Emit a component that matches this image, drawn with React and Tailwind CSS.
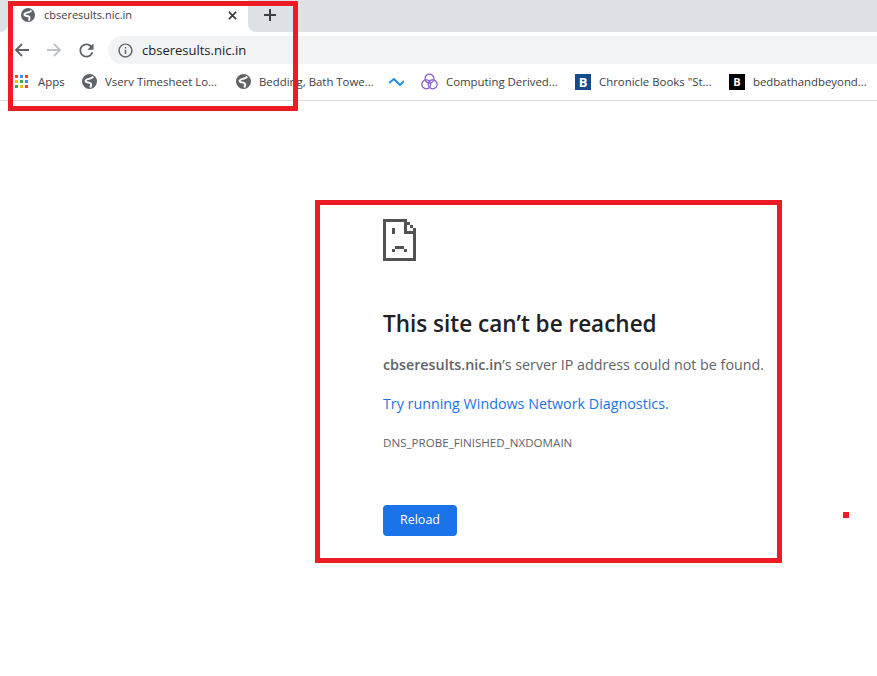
function Globe({ className }) {
  return (
    <svg viewBox="2 2 20 20" className={className}>
      <circle cx="12" cy="12" r="10" fill="#5f6368" />
      <path d="M17 5.5c-2 2.5-4 2.500-6 3S6 10 7 12s4 1 6 2 1.500 3 0 6" fill="none" stroke="white" strokeWidth="2.6" />
    </svg>
  );
}

function AppsIcon() {
  const colors = ["#ea4335", "#4285f4", "#ea4335", "#fbbc04", "#34a853", "#4285f4", "#34a853", "#fbbc04", "#ea4335"];
  return (
    <div className="grid grid-cols-3 gap-[2px] w-[13px] h-[13px] shrink-0">
      {colors.map((c, i) => (
        <div key={i} className="w-[3px] h-[3px]" style={{ backgroundColor: c }} />
      ))}
    </div>
  );
}

function Bookmark({ icon, label, className }) {
  return (
    <div className={"flex items-center gap-2 whitespace-nowrap " + className}>
      {icon}
      <span className="text-[11.4px] text-[#3c4043]">{label}</span>
    </div>
  );
}

function SadPage() {
  return (
    <svg width="33" height="42" viewBox="0 0 11 14" shapeRendering="crispEdges" fill="#525252">
      <path d="M0 0h8v1H1v12h9V3h1v11H0z" />
      <path d="M8 1h1v1H8zM9 2h1v1H9zM7 1h1v3h3v1H7z" />
      <path d="M3 3h1v2H3zM4 9h3v1H4zM3 10h1v1H3zM7 10h1v1H7z" />
    </svg>
  );
}

export default function App() {
  return (
    <div className="relative w-[877px] h-[676px] overflow-hidden bg-white font-['Open_Sans',sans-serif]">
      {/* TABS */}
      <div className="h-8 flex">
        <div className="w-[8px] bg-[#dee1e6] rounded-br-lg" />
        <div className="w-[240px] bg-white rounded-t-lg flex items-center pl-[13px] pr-[11px] pb-[2px]">
          <Globe className="w-[14px] h-[14px]" />
          <span className="ml-[9px] text-[11px] text-[#3c4043]">cbseresults.nic.in</span>
          <svg viewBox="0 0 10 10" className="w-[9px] h-[9px] ml-auto" stroke="#3c4043" strokeWidth="1.9">
            <path d="M1 1l8 8M9 1l-8 8" />
          </svg>
        </div>
        <div className="flex-1 bg-[#dee1e6] rounded-bl-lg flex items-center pl-[16px] pb-[3px]">
          <svg viewBox="0 0 12 12" className="w-[12px] h-[12px]" stroke="#3c4043" strokeWidth="2">
            <path d="M6 0v12M0 6h12" />
          </svg>
        </div>
      </div>

      {/* TOOLBAR */}
      <div className="h-8 flex items-start pt-1">
        <div className="w-[108px] h-7 flex items-center pl-[6px]">
          <div className="w-8 flex justify-center">
            <svg viewBox="0 0 16 16" className="w-[16px] h-[16px]" fill="none" stroke="#5f6368" strokeWidth="1.8">
              <path d="M15 8H2M8 2L2 8l6 6" />
            </svg>
          </div>
          <div className="w-8 flex justify-center">
            <svg viewBox="0 0 16 16" className="w-[16px] h-[16px]" fill="none" stroke="#bdc1c6" strokeWidth="1.8">
              <path d="M1 8h13M8 2l6 6-6 6" />
            </svg>
          </div>
          <div className="w-8 flex justify-center">
            <svg viewBox="0 0 24 24" className="w-[21px] h-[21px]" fill="#5f6368">
              <path d="M17.65 6.35C16.2 4.9 14.21 4 12 4c-4.42 0-7.99 3.58-7.99 8s3.57 8 7.99 8c3.73 0 6.84-2.55 7.73-6h-2.08c-.82 2.33-3.04 4-5.65 4-3.31 0-6-2.69-6-6s2.69-6 6-6c1.66 0 3.14.69 4.22 1.78L13 11h7V4l-2.35 2.35z" />
            </svg>
          </div>
        </div>
        <div className="flex-1 h-7 bg-[#f1f3f4] rounded-l-full flex items-center pl-[9px]">
          <svg viewBox="0 0 24 24" className="w-[17px] h-[17px]" fill="#5f6368">
            <path d="M11 7h2v2h-2zm0 4h2v6h-2zm1-9C6.48 2 2 6.48 2 12s4.48 10 10 10 10-4.48 10-10S17.52 2 12 2zm0 18c-4.41 0-8-3.59-8-8s3.59-8 8-8 8 3.59 8 8-3.59 8-8 8z" />
          </svg>
          <span className="ml-[8px] pt-[1px] text-[13px] text-[#202124]">cbseresults.nic.in</span>
        </div>
      </div>

      {/* BOOKMARKS */}
      <div className="h-[37px] border-b border-[#dadce0] flex items-center pl-[15px]">
        <Bookmark icon={<AppsIcon />} label="Apps" className="w-[67px] gap-[10px]" />
        <Bookmark icon={<Globe className="w-[15px] h-[15px]" />} label="Vserv Timesheet Lo..." className="w-[154px]" />
        <Bookmark icon={<Globe className="w-[15px] h-[15px]" />} label="Bedding, Bath Towe..." className="w-[153px]" />
        <div className="w-[32px] flex items-center">
          <svg viewBox="0 0 15 8" className="w-[15px] h-[8px]" fill="none" stroke="#1a8fe3" strokeWidth="1.9">
            <path d="M0 5l5-4 6 6 4-4" />
          </svg>
        </div>
        <Bookmark
          icon={
            <svg viewBox="0 0 16 16" className="w-[17px] h-[17px]" fill="none" stroke="#8a5fc7" strokeWidth="1.2">
              <circle cx="8" cy="5.3" r="4.2" />
              <circle cx="5" cy="10.7" r="4.2" />
              <circle cx="11" cy="10.7" r="4.2" />
            </svg>
          }
          label="Computing Derived..."
          className="w-[154px]"
        />
        <Bookmark
          icon={
            <div className="w-4 h-4 bg-[#164a8a] text-white text-[13px] leading-4 font-bold text-center">B</div>
          }
          label="Chronicle Books &quot;St..."
          className="w-[154px]"
        />
        <Bookmark
          icon={
            <div className="w-4 h-4 bg-black text-white text-[11px] leading-4 font-bold text-center">B</div>
          }
          label="bedbathandbeyond..."
          className=""
        />
      </div>

      {/* ERROR PAGE */}
      <div className="pl-[383px] pt-[118px]">
        <SadPage />
        <h1 className="mt-[46px] text-[22.5px] leading-[34px] font-semibold text-[#202124]">This site can’t be reached</h1>
        <p className="mt-[14px] text-[14.3px] leading-5 text-[#5f6368]">
          <span className="font-semibold">cbseresults.nic.in</span>’s server IP address could not be found.
        </p>
        <p className="mt-[19px] text-[14.3px] leading-5 text-[#1a73e8]">Try running Windows Network Diagnostics.</p>
        <p className="mt-[21px] text-[11.6px] leading-4 text-[#5f6368]">DNS_PROBE_FINISHED_NXDOMAIN</p>
        <button className="mt-[54px] w-[74px] h-[31px] bg-[#1a73e8] rounded text-white text-[12.5px] font-medium">
          Reload
        </button>
      </div>

      {/* RED ANNOTATIONS */}
      <div className="absolute left-[8px] top-[1px] w-[290px] h-[110px] border-[5px] border-[#ed1c24]" />
      <div className="absolute left-[315px] top-[200px] w-[467px] h-[363px] border-[5px] border-[#ed1c24]" />
      <div className="absolute left-[843px] top-[512px] w-[6px] h-[6px] bg-[#ed1c24]" />
    </div>
  );
}
